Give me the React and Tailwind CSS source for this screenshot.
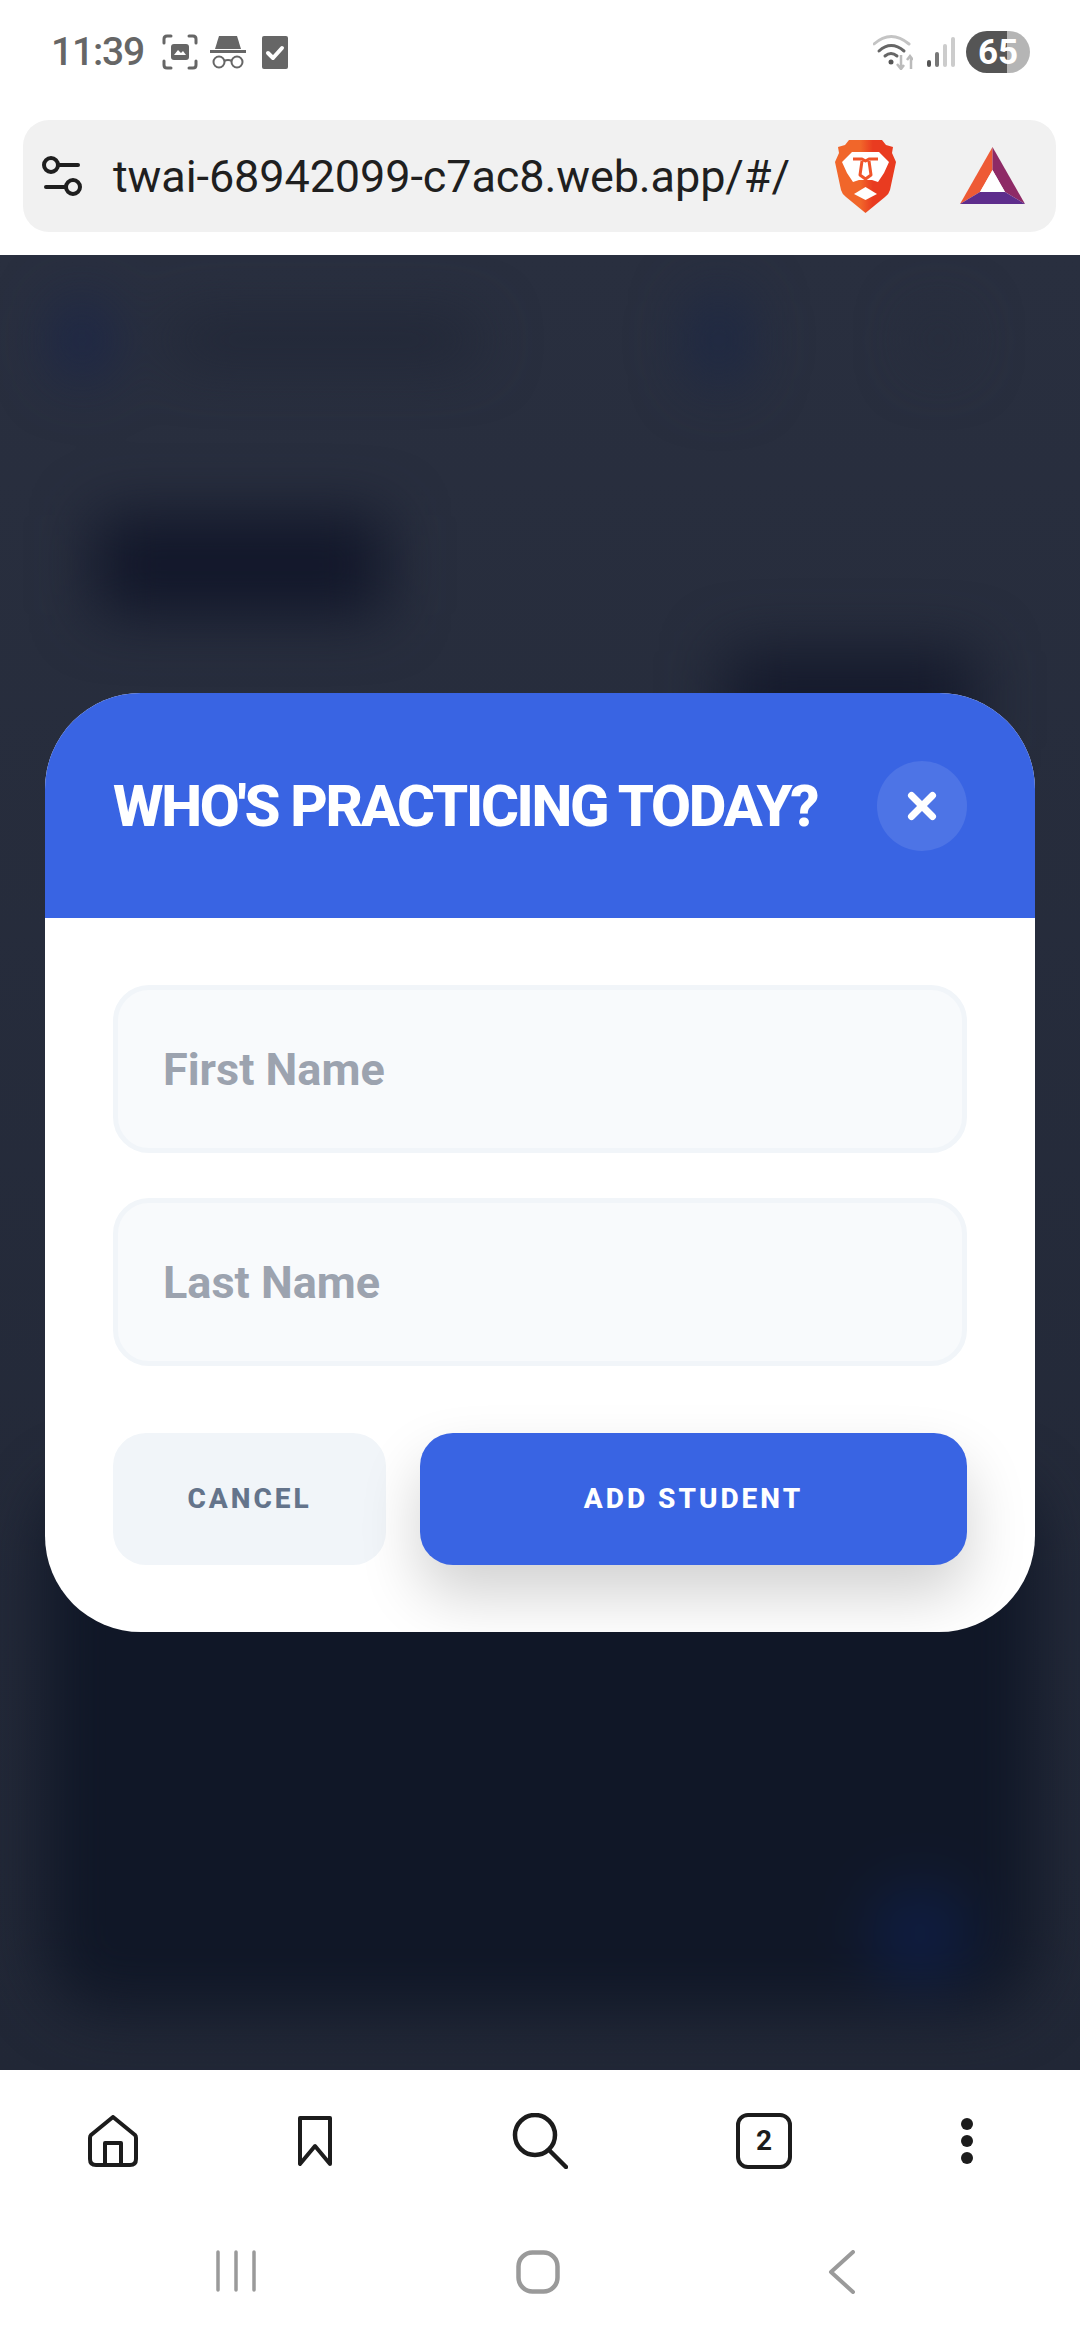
import { X } from "lucide-react";

/* ===============================
   STATUS BAR ICONS
=============================== */

function ScreenshotIcon() {
  return (
    <svg width="36" height="36" viewBox="0 0 36 36" fill="none">
      <path
        d="M9 2H5Q2 2 2 5V9M27 2H31Q34 2 34 5V9M9 34H5Q2 34 2 31V27M27 34H31Q34 34 34 31V27"
        stroke="#666"
        strokeWidth="3"
        strokeLinecap="round"
      />
      <rect x="9" y="10" width="18" height="16" rx="3" fill="#666" />
      <path d="M12 21L16 16L19 19L21 17L24 21Z" fill="#fff" />
    </svg>
  );
}

function IncognitoIcon() {
  return (
    <svg width="36" height="34" viewBox="0 0 36 34" fill="none">
      <path d="M9 1H27L31 14H5Z" fill="#666" />
      <rect x="0" y="15" width="36" height="3" fill="#666" />
      <circle cx="9" cy="27" r="5.5" stroke="#666" strokeWidth="2" />
      <circle cx="27" cy="27" r="5.5" stroke="#666" strokeWidth="2" />
      <path d="M14 26Q18 24 22 26" stroke="#666" strokeWidth="2" />
    </svg>
  );
}

function CheckIcon() {
  return (
    <svg width="26" height="33" viewBox="0 0 26 33" fill="none">
      <rect width="26" height="33" rx="2" fill="#666" />
      <path
        d="M6 17L11 22L20 12"
        stroke="#fff"
        strokeWidth="4"
        strokeLinecap="round"
        strokeLinejoin="round"
      />
    </svg>
  );
}

function WifiIcon() {
  return (
    <svg width="40" height="36" viewBox="0 0 40 36" fill="none">
      <path d="M1 10Q18 -5 36 10" stroke="#c4c4c4" strokeWidth="3" strokeLinecap="round" />
      <path d="M6 17Q18 6 31 17" stroke="#666" strokeWidth="3" strokeLinecap="round" />
      <path d="M12 22Q18 17 24 22" stroke="#666" strokeWidth="3" strokeLinecap="round" />
      <circle cx="18" cy="28" r="2.5" fill="#555" />
      <path d="M28 21V34M24 30L28 35L31 31" stroke="#bbb" strokeWidth="2.5" />
      <path d="M38 35V23M34 26L37 22L40 26" stroke="#bbb" strokeWidth="2.5" />
    </svg>
  );
}

function SignalIcon() {
  return (
    <svg width="28" height="30" viewBox="0 0 28 30">
      <rect x="0" y="23" width="4" height="7" rx="2" fill="#555" />
      <rect x="8" y="15" width="4" height="15" rx="2" fill="#777" />
      <rect x="16" y="7" width="4" height="23" rx="2" fill="#ccc" />
      <rect x="24" y="0" width="4" height="30" rx="2" fill="#ccc" />
    </svg>
  );
}

/* ===============================
   URL BAR ICONS
=============================== */

function SiteSettingsIcon() {
  return (
    <svg width="42" height="40" viewBox="0 0 42 40" fill="none" stroke="#1f1f1f" strokeWidth="4">
      <circle cx="10" cy="9" r="7" />
      <path d="M17 9H37" strokeLinecap="round" />
      <circle cx="32" cy="31" r="7" />
      <path d="M5 31H25" strokeLinecap="round" />
    </svg>
  );
}

function BraveLogo() {
  return (
    <svg width="61" height="73" viewBox="0 0 61 73">
      <defs>
        <linearGradient id="braveFill" x1="0" y1="0" x2="1" y2="0">
          <stop offset="0.42" stopColor="#f1662a" />
          <stop offset="0.62" stopColor="#e93b20" />
        </linearGradient>
      </defs>
      <path
        d="M14 0H47L51 5L58 7L57 13L61 22L55 50Q54 54 50 57L30.5 73L11 57Q7 54 6 50L0 22L4 13L3 7L10 5Z"
        fill="url(#braveFill)"
      />
      <path
        d="M17 12H44L54 22L49 33L43 42L37 40H24L18 42L12 33L7 22Z"
        fill="#fff"
      />
      <path
        d="M18 19H27L30.5 21L34 19H43M27 21L25 35L30.5 39L36 35L34 21"
        fill="none"
        stroke="#f0542a"
        strokeWidth="3"
        strokeLinejoin="round"
      />
      <path d="M30.5 47L42 54L30.5 60L19 54Z" fill="#fff" />
    </svg>
  );
}

function BatLogo() {
  return (
    <svg width="65" height="58" viewBox="0 0 65 58">
      <path d="M32.5 0L0 57L20 45L32.5 23Z" fill="#ee5a35" />
      <path d="M32.5 0L65 57L45 45L32.5 23Z" fill="#8e2a66" />
      <path d="M0 57H65L45 45H20Z" fill="#5e2d8c" />
      <path d="M32.5 23L45 45H20Z" fill="#fff" />
    </svg>
  );
}

/* ===============================
   BOTTOM BAR ICONS
=============================== */

function HomeIcon() {
  return (
    <svg width="50" height="52" viewBox="0 0 50 52" fill="none" stroke="#1c1c1c" strokeWidth="4" strokeLinejoin="round">
      <path d="M25 2L3 20Q2 21 2 23V44Q2 50 8 50H42Q48 50 48 44V23Q48 21 47 20Z" />
      <path d="M17 50V28H33V50" />
    </svg>
  );
}

function BookmarkIcon() {
  return (
    <svg width="34" height="50" viewBox="0 0 34 50" fill="none" stroke="#1c1c1c" strokeWidth="4" strokeLinejoin="round">
      <path d="M2 2H32V48L17 30L2 48Z" />
    </svg>
  );
}

function SearchIcon() {
  return (
    <svg width="56" height="56" viewBox="0 0 56 56" fill="none" stroke="#1c1c1c" strokeWidth="4.5" strokeLinecap="round">
      <circle cx="23" cy="22" r="20" />
      <path d="M37 37L54 54" />
    </svg>
  );
}

function MoreIcon() {
  return (
    <svg width="12" height="46" viewBox="0 0 12 46" fill="#1c1c1c">
      <circle cx="6" cy="6" r="6" />
      <circle cx="6" cy="23" r="6" />
      <circle cx="6" cy="40" r="6" />
    </svg>
  );
}

function RecentsIcon() {
  return (
    <svg width="40" height="42" viewBox="0 0 40 42" fill="none" stroke="#9a9a9a" strokeWidth="3.5" strokeLinecap="round">
      <path d="M2 2V40M20 2V40M38 2V40" />
    </svg>
  );
}

function NavHomeIcon() {
  return (
    <svg width="44" height="44" viewBox="0 0 44 44" fill="none" stroke="#9a9a9a" strokeWidth="4.5">
      <rect x="2.5" y="2.5" width="39" height="39" rx="14" />
    </svg>
  );
}

function BackIcon() {
  return (
    <svg width="27" height="44" viewBox="0 0 27 44" fill="none" stroke="#9a9a9a" strokeWidth="4" strokeLinecap="round" strokeLinejoin="round">
      <path d="M25 2L3 22L25 42" />
    </svg>
  );
}

/* ===============================
   PAGE BEHIND THE MODAL (BLURRED)
=============================== */

function BlurredPage() {
  return (
    <div className="absolute inset-0 flex flex-col blur-[30px]">

      {/* APP HEADER */}
      <div className="flex items-center h-[90px] mt-[40px] pl-[60px]">
        <div className="w-[44px] h-[76px] rounded-full bg-[#16224a]" />
        <div className="w-[310px] h-[36px] ml-[65px] rounded-full bg-[#1f2535]" />
        <div className="w-[50px] h-[90px] ml-[215px] rounded-full bg-[#1a2645]" />
        <div className="w-[40px] h-[50px] ml-[175px] rounded-full bg-[#252b3b]" />
      </div>

      {/* PAGE TITLE */}
      <div className="w-[290px] h-[100px] mt-[130px] ml-[95px] rounded-lg bg-[#12172a]" />

      {/* ACTION BUTTON */}
      <div className="w-[250px] h-[100px] mt-[35px] ml-[725px] rounded-lg bg-[#151a2c]" />

      {/* MAIN CARD */}
      <div className="flex justify-end items-end w-[990px] h-[530px] mt-auto mb-[60px] ml-[45px] pr-[65px] pb-[25px] rounded-[60px] bg-[#101727]">
        <div className="w-[100px] h-[100px] rounded-full bg-[#0f1d42]" />
      </div>

    </div>
  );
}

/* ===============================
   MODAL
=============================== */

function StudentModal() {
  return (
    <div className="relative w-[990px] rounded-[96px] overflow-hidden bg-white">

      {/* HEADER */}
      <div className="flex items-center justify-between h-[225px] px-[68px] bg-[#3964e3]">
        <h2 className="text-[58px] leading-none font-extrabold tracking-[-2.3px] text-white uppercase whitespace-nowrap">
          Who's Practicing Today?
        </h2>
        <button className="flex items-center justify-center w-[90px] h-[90px] rounded-full bg-white/10 text-white">
          <X size={42} strokeWidth={4} />
        </button>
      </div>

      {/* FORM */}
      <div className="px-[68px] pt-[67px] pb-[67px]">
        <input
          placeholder="First Name"
          className="block w-full h-[168px] px-[45px] rounded-[36px] border-[5px] border-[#f1f5f9] bg-[#f8fafc] text-[45px] font-bold placeholder:text-[#9ca3af] outline-none"
        />
        <input
          placeholder="Last Name"
          className="block w-full h-[168px] mt-[45px] px-[45px] rounded-[36px] border-[5px] border-[#f1f5f9] bg-[#f8fafc] text-[45px] font-bold placeholder:text-[#9ca3af] outline-none"
        />

        <div className="flex gap-[34px] mt-[67px]">
          <button className="w-[273px] h-[132px] rounded-[33px] bg-[#f1f5f9] text-[28px] font-extrabold tracking-[3px] text-[#64748b] uppercase">
            Cancel
          </button>
          <button className="flex-1 h-[132px] rounded-[33px] bg-[#3964e3] text-[28px] font-extrabold tracking-[3px] text-white uppercase shadow-[0_30px_60px_rgba(0,0,0,0.18)]">
            Add Student
          </button>
        </div>
      </div>

    </div>
  );
}

export default function App() {
  return (
    <div className="flex flex-col w-[1080px] h-[2340px] bg-white font-['Roboto',sans-serif]">

      {/* STATUS BAR */}
      <div className="flex items-center h-[104px] pl-[51px] pr-[50px]">
        <span className="text-[39px] font-medium tracking-[-1.2px] leading-none text-[#666]">11:39</span>
        <div className="ml-[18px]"><ScreenshotIcon /></div>
        <div className="ml-[12px]"><IncognitoIcon /></div>
        <div className="ml-[16px]"><CheckIcon /></div>

        <div className="ml-auto"><WifiIcon /></div>
        <div className="ml-[14px]"><SignalIcon /></div>
        <div className="relative flex items-center justify-center w-[64px] h-[42px] ml-[11px] rounded-full overflow-hidden bg-[linear-gradient(90deg,#555_64%,#b5b5b5_64%)]">
          <span className="text-[35px] font-bold leading-none text-white">65</span>
        </div>
      </div>

      {/* URL BAR */}
      <div className="h-[151px] pt-[16px] pl-[23px] pr-[24px]">
        <div className="flex items-center h-[112px] pl-[18px] rounded-[26px] bg-[#f1f1f1]">
          <SiteSettingsIcon />
          <span className="ml-[30px] text-[45px] tracking-[-0.1px] leading-none text-[#1f1f1f] whitespace-nowrap">
            twai-68942099-c7ac8.web.app/#/
          </span>
          <div className="ml-[45px]"><BraveLogo /></div>
          <div className="ml-[64px]"><BatLogo /></div>
        </div>
      </div>

      {/* PAGE WITH MODAL */}
      <div className="relative flex-1 flex items-center justify-center overflow-hidden bg-gradient-to-b from-[#292f3f] to-[#212736]">
        <BlurredPage />
        <StudentModal />
      </div>

      {/* BROWSER TOOLBAR */}
      <div className="flex items-center h-[142px] pl-[88px]">
        <HomeIcon />
        <div className="ml-[160px]"><BookmarkIcon /></div>
        <div className="ml-[180px]"><SearchIcon /></div>
        <div className="flex items-center justify-center w-[56px] h-[56px] ml-[168px] rounded-[12px] border-[4px] border-[#1c1c1c] text-[28px] font-bold leading-none text-[#1c1c1c]">
          2
        </div>
        <div className="ml-[169px]"><MoreIcon /></div>
      </div>

      {/* ANDROID NAV BAR */}
      <div className="flex items-start h-[128px] pt-[38px] pl-[216px]">
        <RecentsIcon />
        <div className="ml-[260px]"><NavHomeIcon /></div>
        <div className="ml-[268px]"><BackIcon /></div>
      </div>

    </div>
  );
}
